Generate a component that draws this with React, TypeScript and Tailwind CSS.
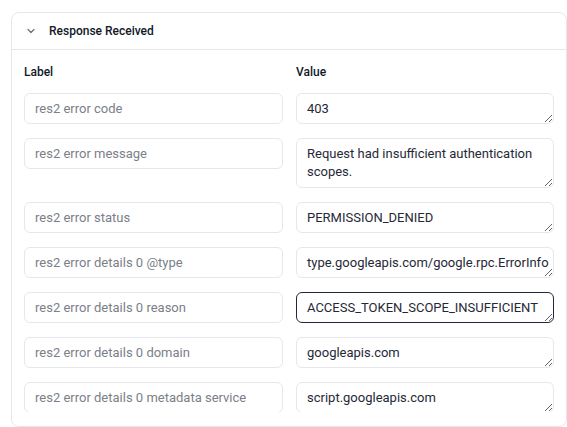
import React from "react";

type Row = { label: string; value: string; rows?: number; focused?: boolean };

const rows: Row[] = [
  { label: "res2 error code", value: "403" },
  { label: "res2 error message", value: "Request had insufficient authentication scopes.", rows: 2 },
  { label: "res2 error status", value: "PERMISSION_DENIED" },
  { label: "res2 error details 0 @type", value: "type.googleapis.com/google.rpc.ErrorInfo" },
  { label: "res2 error details 0 reason", value: "ACCESS_TOKEN_SCOPE_INSUFFICIENT", focused: true },
  { label: "res2 error details 0 domain", value: "googleapis.com" },
  { label: "res2 error details 0 metadata service", value: "script.googleapis.com" },
];

export default function App() {
  return (
    <div
      className="w-[567px] h-[427px] bg-white overflow-hidden pt-[12px] pl-[11px]"
      style={{ fontFamily: "Roboto, 'Noto Sans', sans-serif" }}
    >
      <div className="w-[556px] h-[415px] border border-[#e5e7eb] rounded-lg flex flex-col overflow-hidden">
        <div className="h-[37px] shrink-0 flex items-center border-b border-[#e5e7eb] pl-[14px]">
          <svg width="10" height="10" viewBox="0 0 10 10" className="text-[#6b7280]">
            <path d="M2 3.5 L5 6.5 L8 3.5" fill="none" stroke="currentColor" strokeWidth="1.3" strokeLinecap="round" strokeLinejoin="round" />
          </svg>
          <span className="ml-[13px] text-[12px] font-medium text-[#111827]">Response Received</span>
        </div>
        <div className="h-[362px] shrink-0 overflow-hidden px-[12px] pt-[13px]">
          <div className="grid grid-cols-[259px_258px] gap-x-[13px]">
            <div className="text-[12px] font-medium text-[#111827] h-[18px] leading-[18px]">Label</div>
            <div className="text-[12px] font-medium text-[#111827] h-[18px] leading-[18px]">Value</div>
          </div>
          <div className="mt-[12px] flex flex-col gap-[14px]">
            {rows.map((r) => (
              <div key={r.label} className="grid grid-cols-[259px_258px] gap-x-[13px] items-start">
                <input
                  readOnly
                  placeholder={r.label}
                  className="h-[31px] w-full rounded-md border border-[#e5e7eb] px-[10px] text-[13px] text-[#111827] placeholder:text-[#7b8088] outline-none bg-white"
                />
                <textarea
                  readOnly
                  defaultValue={r.value}
                  rows={r.rows ?? 1}
                  wrap={r.rows === 2 ? "soft" : "off"}
                  className={
                    (r.focused ? "border-[#1f2937] " : "border-[#e5e7eb] ") +
                    "w-full rounded-md border px-[10px] pt-[6px] pb-[5px] text-[13px] leading-[18px] text-[#1f2937] outline-none resize-y overflow-hidden bg-white"
                  }
                  style={{ height: r.rows === 2 ? 50 : 31 }}
                />
              </div>
            ))}
          </div>
        </div>
      </div>
    </div>
  );
}
